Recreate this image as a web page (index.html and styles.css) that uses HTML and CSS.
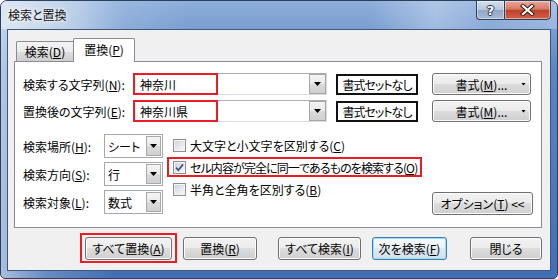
FILE: index.html
```html
<!DOCTYPE html>
<html lang="ja">
<head>
    <meta charset="UTF-8">
    <title>検索と置換</title>
    <link rel="stylesheet" href="styles.css">
</head>
<body>
    <div class="window">
        <div class="titlebar">
            <span class="title">検索と置換</span>
            <div class="caption-buttons">
                <span class="cap-btn help-btn">?</span>
                <span class="cap-btn close-btn">
                    <svg width="15" height="12" viewBox="0 0 15 12">
                        <path d="M3 2 L12 10 M12 2 L3 10" stroke="#3a1d18" stroke-width="4.2" stroke-linecap="square" fill="none"/>
                        <path d="M3 2 L12 10 M12 2 L3 10" stroke="#fff" stroke-width="2.2" stroke-linecap="square" fill="none"/>
                    </svg>
                </span>
            </div>
        </div>

        <div class="client">
            <div class="tabs">
                <div class="tab"><span>検索(<u>D</u>)</span></div>
                <div class="tab active"><span>置換(<u>P</u>)</span></div>
            </div>

            <div class="panel">
                <div class="replace-grid">
                    <label class="field-label">検索する文字列(<u>N</u>):</label>
                    <div class="combo">
                        <span class="combo-text marked">神奈川</span>
                        <span class="combo-btn"><span class="arrow"></span></span>
                    </div>
                    <div class="format-preview">書式セットなし</div>
                    <button class="btn format-btn"><span class="btn-text">書式(<u>M</u>)...</span><span class="arrow small"></span></button>

                    <label class="field-label">置換後の文字列(<u>E</u>):</label>
                    <div class="combo">
                        <span class="combo-text marked">神奈川県</span>
                        <span class="combo-btn"><span class="arrow"></span></span>
                    </div>
                    <div class="format-preview">書式セットなし</div>
                    <button class="btn format-btn"><span class="btn-text">書式(<u>M</u>)...</span><span class="arrow small"></span></button>
                </div>

                <div class="options">
                    <div class="option-selects">
                        <label class="field-label">検索場所(<u>H</u>):</label>
                        <div class="select"><span class="select-text">シート</span><span class="select-btn"><span class="arrow"></span></span></div>

                        <label class="field-label">検索方向(<u>S</u>):</label>
                        <div class="select"><span class="select-text">行</span><span class="select-btn"><span class="arrow"></span></span></div>

                        <label class="field-label">検索対象(<u>L</u>):</label>
                        <div class="select"><span class="select-text">数式</span><span class="select-btn"><span class="arrow"></span></span></div>
                    </div>

                    <div class="checks">
                        <label class="check"><span class="box"></span><span>大文字と小文字を区別する(<u>C</u>)</span></label>
                        <label class="check marked">
                            <span class="box">
                                <svg width="9" height="9" viewBox="0 0 9 9"><path d="M1 4.6 L3.4 7.2 L8 1.4" stroke="#3f4f8c" stroke-width="1.7" fill="none"/></svg>
                            </span>
                            <span class="tight">セル内容が完全に同一であるものを検索する(<u>O</u>)</span>
                        </label>
                        <label class="check"><span class="box"></span><span>半角と全角を区別する(<u>B</u>)</span></label>
                    </div>

                    <button class="btn options-btn"><span>オプション(<u>T</u>) &lt;&lt;</span></button>
                </div>
            </div>

            <div class="actions">
                <span class="mark-wrap"><button class="btn replace-all"><span>すべて置換(<u>A</u>)</span></button></span>
                <button class="btn replace-one"><span>置換(<u>R</u>)</span></button>
                <button class="btn find-all"><span>すべて検索(<u>I</u>)</span></button>
                <button class="btn find-next default"><span>次を検索(<u>F</u>)</span></button>
                <button class="btn close"><span>閉じる</span></button>
            </div>
        </div>
    </div>
</body>
</html>
```

FILE: styles.css
```css
* {
    box-sizing: border-box;
}

body {
    margin: 0;
    background: #fff;
    font-family: "Noto Sans CJK JP", "Noto Sans", sans-serif;
    font-size: 12px;
    font-feature-settings: "palt";
    color: #000;
}

button {
    font: inherit;
    color: inherit;
    margin: 0;
    padding: 0;
    white-space: nowrap;
}

u {
    text-underline-offset: 1px;
}

/* window frame */
.window {
    width: 558px;
    height: 279px;
    display: flex;
    flex-direction: column;
    border: 1px solid #28415f;
    border-radius: 7px 7px 5px 5px;
    overflow: hidden;
    background:
        linear-gradient(to right, rgba(255,255,255,0.55) 0%, rgba(255,255,255,0.2) 8%, rgba(255,255,255,0) 20%),
        linear-gradient(to bottom, #8eaedb 0%, #5a86c4 25%, #426fb4 100%);
}

.titlebar {
    height: 28px;
    flex-shrink: 0;
    display: flex;
    align-items: flex-start;
    background: linear-gradient(to right, rgba(225,234,245,0.85) 0%, rgba(205,220,238,0.75) 12%, rgba(170,196,228,0.4) 22%, rgba(255,255,255,0) 34%, rgba(255,255,255,0) 66%, rgba(255,255,255,0.3) 78%, rgba(255,255,255,0.12) 88%, rgba(255,255,255,0.25) 100%);
}

.title {
    margin: 5px 0 0 7px;
    line-height: 17px;
    color: #111;
    text-shadow: 0 0 6px #fff, 0 0 3px #fff;
}

.caption-buttons {
    display: flex;
    margin-left: auto;
    margin-right: 6px;
}

.cap-btn {
    height: 20px;
    margin-top: -1px;
    display: flex;
    align-items: center;
    justify-content: center;
    border: 1px solid #2e3f58;
    box-shadow: inset 0 0 0 1px rgba(255,255,255,0.45);
}

.help-btn {
    width: 28px;
    border-radius: 0 0 0 4px;
    border-right: none;
    background: linear-gradient(to bottom, #d6e0ed 0%, #b5c6dd 48%, #8fa6c6 52%, #a7bcd8 100%);
    color: #fff;
    font-family: "DejaVu Sans", sans-serif;
    font-weight: bold;
    font-size: 13px;
    text-shadow: 1px 0 0 #26334a, -1px 0 0 #26334a, 0 1px 0 #26334a, 0 -1px 0 #26334a;
}

.close-btn {
    width: 47px;
    border-radius: 0 0 4px 0;
    background: linear-gradient(to bottom, #e9a99b 0%, #d77a66 45%, #c23f2a 52%, #d2604a 100%);
}

/* client area */
.client {
    flex: 1;
    display: flex;
    flex-direction: column;
    margin: 0 6px 7px 6px;
    border: 1px solid #3d587c;
    background: #f0f0f0;
}

.tabs {
    display: flex;
    align-items: flex-end;
    height: 23px;
    margin: 8px 0 0 8px;
}

.tab {
    display: flex;
    align-items: center;
    justify-content: center;
    border: 1px solid #898c95;
    border-bottom: none;
}

.tab:first-child {
    width: 57px;
    height: 20px;
    border-right: none;
    border-radius: 2px 0 0 0;
    background: linear-gradient(to bottom, #f3f3f3 0%, #ebebeb 50%, #dddddd 51%, #cfcfcf 100%);
}

.tab.active {
    width: 62px;
    height: 24px;
    margin-bottom: -1px;
    position: relative;
    z-index: 1;
    background: #fff;
    border-radius: 2px 2px 0 0;
    padding-bottom: 2px;
}

.panel {
    height: 167px;
    margin: 0 8px 0 6px;
    padding: 11px 0 0 8px;
    border: 1px solid #898c95;
    background: #fff;
}

.field-label {
    white-space: nowrap;
}

/* find / replace rows */
.replace-grid {
    display: grid;
    grid-template-columns: 110px 194px 91px 113px;
    grid-auto-rows: 22px;
    row-gap: 5px;
    align-items: center;
}

.combo {
    height: 22px;
    display: flex;
    border: 1px solid #d9dde3;
    border-top-color: #abadb3;
    background: #fff;
}

.combo-text {
    width: 85px;
    display: flex;
    align-items: center;
    padding-left: 5px;
}

.combo-text.marked {
    margin: -1px 0 -1px -1px;
    border: 2px solid #ea1c24;
}

.combo-btn {
    width: 17px;
    margin-left: auto;
    display: flex;
    align-items: center;
    justify-content: center;
    border: 1px solid #a6a6a6;
    background: linear-gradient(to bottom, #f4f4f4 0%, #e9e9e9 50%, #dadada 51%, #d0d0d0 100%);
}

.arrow {
    width: 7px;
    height: 4px;
    background: #000;
    clip-path: polygon(0 0, 100% 0, 50% 100%);
}

.arrow.small {
    width: 5px;
    height: 3px;
    justify-self: end;
    margin-right: 4px;
}

.format-preview {
    width: 82px;
    height: 21px;
    margin-left: 9px;
    display: flex;
    align-items: center;
    justify-content: center;
    border: 2px solid #111;
    background: #fff;
    letter-spacing: -1px;
    white-space: nowrap;
}

.btn {
    height: 23px;
    display: flex;
    align-items: center;
    justify-content: center;
    border: 1px solid #707070;
    border-radius: 3px;
    background: linear-gradient(to bottom, #f2f2f2 0%, #ebebeb 49%, #dddddd 50%, #cfcfcf 100%);
    box-shadow: inset 0 0 0 1px #fbfbfb;
}

.format-btn {
    width: 99px;
    height: 22px;
    margin-left: 14px;
    display: grid;
    grid-template-columns: 1fr auto 1fr;
    align-items: center;
}

.format-btn .btn-text {
    grid-column: 2;
}

.format-btn .arrow {
    grid-column: 3;
}

/* search options */
.options {
    display: flex;
    margin-top: 12px;
    height: 81px;
}

.option-selects {
    display: grid;
    grid-template-columns: 81px 59px;
    grid-auto-rows: 24px;
    row-gap: 4px;
    align-items: center;
    align-content: start;
}

.select {
    height: 24px;
    display: flex;
    border: 1px solid #a4a9b0;
    background: #fff;
}

.select-text {
    flex: 1;
    display: flex;
    align-items: center;
    padding-left: 3px;
}

.select-btn {
    width: 15px;
    margin: 1px;
    display: flex;
    align-items: center;
    justify-content: center;
    border: 1px solid #a9a9a9;
    background: linear-gradient(to bottom, #f4f4f4 0%, #e9e9e9 50%, #dadada 51%, #d0d0d0 100%);
}

.checks {
    display: flex;
    flex-direction: column;
    align-items: flex-start;
    gap: 2px;
    margin-left: 4px;
    padding-top: 1px;
}

.check {
    height: 20px;
    display: flex;
    align-items: center;
    gap: 4px;
    padding: 0 3px 0 4px;
    border: 2px solid transparent;
    white-space: nowrap;
}

.check.marked {
    border-color: #ea1c24;
}

.check .tight {
    letter-spacing: -0.9px;
}

.box {
    width: 13px;
    height: 13px;
    flex-shrink: 0;
    display: flex;
    align-items: center;
    justify-content: center;
    border: 1px solid #8e8f8f;
    background: linear-gradient(135deg, #c9ced5 0%, #e6e8eb 55%, #f8f8f8 100%);
    box-shadow: inset 0 0 0 1px #f4f4f4;
}

.options-btn {
    width: 101px;
    margin-left: auto;
    margin-right: 8px;
    align-self: flex-end;
}

/* dialog buttons */
.actions {
    display: flex;
    align-items: flex-start;
    margin-top: 5px;
    padding-left: 72px;
}

.mark-wrap {
    display: flex;
    padding: 2px 3px 1px;
    border: 2px solid #ea1c24;
}

.actions > .btn {
    margin-top: 4px;
}

.replace-all {
    width: 87px;
}

.replace-one {
    width: 74px;
    margin-left: 6px;
}

.find-all {
    width: 83px;
    margin-left: 21px;
}

.find-next {
    width: 75px;
    margin-left: 11px;
}

.btn.default {
    border-color: #3c7fb1;
    box-shadow: inset 0 0 0 1px #9fdcf6;
    background: linear-gradient(to bottom, #f4f9fc 0%, #ecf3f8 49%, #dde9f1 50%, #d2e0ea 100%);
}

.close {
    width: 72px;
    margin-left: 23px;
}
```
